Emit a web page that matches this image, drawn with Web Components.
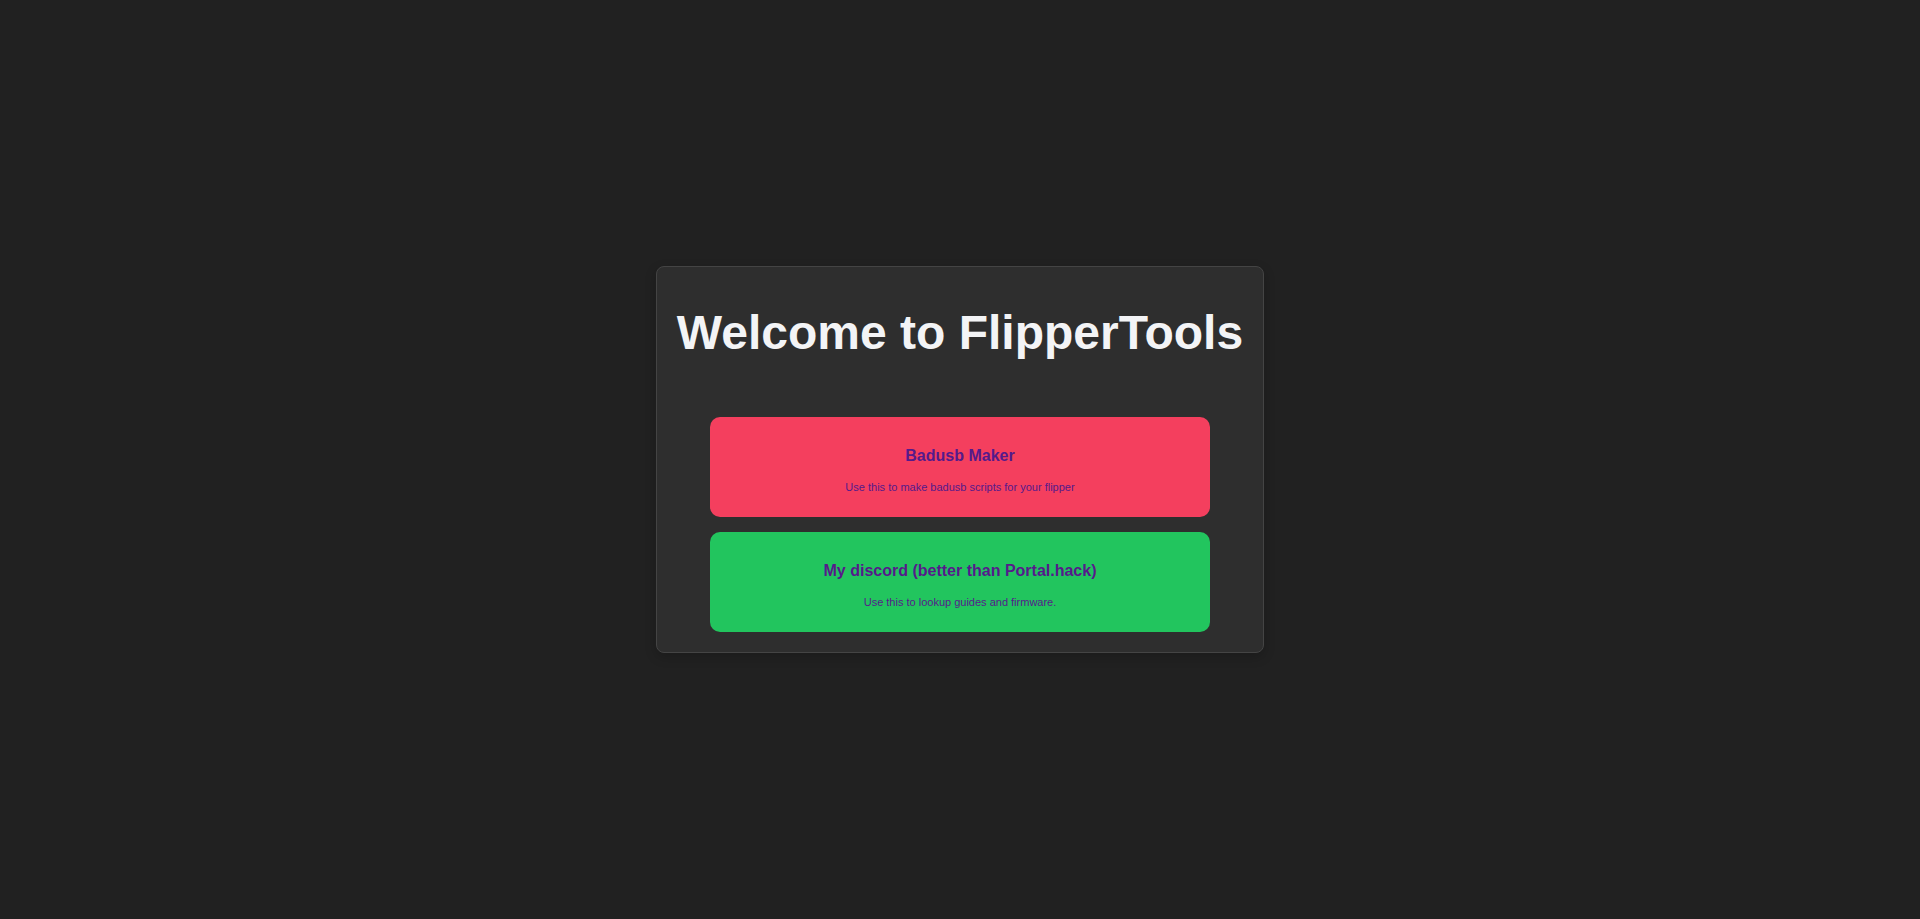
<!DOCTYPE html>
<html lang="en">
<head>
<meta charset="utf-8">
<title>FlipperTools</title>
<style>
body { margin: 0; background: #212121; color: #f3f4f6; font-family: "Liberation Sans", Arial, sans-serif; }
</style>
</head>
<body>
<welcome-panel>
  <span slot="title">Welcome to FlipperTools</span>
  <tool-card style="--card-color:#f43f5e;--link-color:#551a8b" href="#badusb">
    <span slot="heading">Badusb Maker</span>
    <span slot="text">Use this to make badusb scripts for your flipper</span>
  </tool-card>
  <tool-card style="--card-color:#22c55e;--link-color:#551a8b" href="#discord">
    <span slot="heading">My discord (better than Portal.hack)</span>
    <span slot="text">Use this to lookup guides and firmware.</span>
  </tool-card>
</welcome-panel>
<script>
customElements.define('welcome-panel', class extends HTMLElement {
  constructor() {
    super();
    this.attachShadow({ mode: 'open' }).innerHTML = `
      <style>
        :host { display: flex; min-height: 100vh; align-items: center; justify-content: center; }
        main { box-sizing: border-box; padding: 20px; background: #2e2e2e; border: 1px solid #444; border-radius: 8px; box-shadow: 0 4px 12px rgba(0,0,0,.2); }
        h1 { margin: 18px 0 56px; font-size: 48px; line-height: 56px; text-align: center; }
        nav { display: flex; flex-direction: column; align-items: center; gap: 15px; }
      </style>
      <main><h1><slot name="title"></slot></h1><nav><slot></slot></nav></main>`;
  }
});
customElements.define('tool-card', class extends HTMLElement {
  constructor() {
    super();
    this.attachShadow({ mode: 'open' }).innerHTML = `
      <style>
        :host { display: block; width: 500px; max-width: 100%; }
        a { display: block; box-sizing: border-box; min-height: 100px; padding: 30px 20px 24px; border-radius: 10px; background: var(--card-color); color: var(--link-color); text-decoration: none; text-align: center; }
        h2 { margin: 0; font-size: 16px; line-height: 18px; }
        p { margin: 16px 0 0; font-size: 11px; line-height: 12px; }
      </style>
      <a><h2><slot name="heading"></slot></h2><p><slot name="text"></slot></p></a>`;
  }
  connectedCallback() {
    this.shadowRoot.querySelector('a').href = this.getAttribute('href');
  }
});
</script>
</body>
</html>
